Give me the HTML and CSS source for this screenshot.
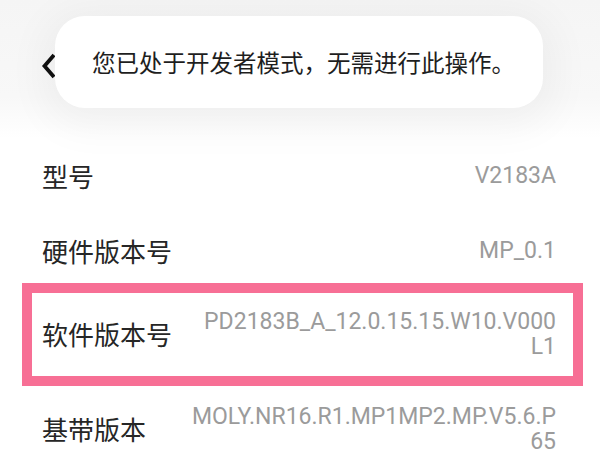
FILE: index.html
```html
<!DOCTYPE html>
<html lang="zh-CN">
<head>
    <meta charset="UTF-8">
    <meta name="viewport" content="width=device-width, initial-scale=1.0">
    <title>关于手机</title>
    <link rel="stylesheet" href="styles.css">
</head>
<body>
    <div class="topbar">
        <svg class="back" width="16" height="26" viewBox="0 0 16 26">
            <polyline points="13,2 3.5,13 13,24" fill="none" stroke="#111" stroke-width="3.8" stroke-linecap="butt" stroke-linejoin="miter"/>
        </svg>
    </div>

    <div class="toast">您已处于开发者模式，无需进行此操作。</div>

    <div class="list">
        <div class="row">
            <span class="label">型号</span>
            <span class="value">V2183A</span>
        </div>
        <div class="row">
            <span class="label">硬件版本号</span>
            <span class="value">MP_0.1</span>
        </div>
        <div class="row marked">
            <span class="label">软件版本号</span>
            <span class="value">PD2183B_A_12.0.15.15.W10.V000<br>L1</span>
        </div>
        <div class="row">
            <span class="label">基带版本</span>
            <span class="value">MOLY.NR16.R1.MP1MP2.MP.V5.6.P<br>65</span>
        </div>
    </div>
</body>
</html>
```

FILE: styles.css
```css
* {
    box-sizing: border-box;
}

body {
    margin: 0;
    background: #ffffff;
    font-family: "Noto Sans CJK SC", "Noto Sans", sans-serif;
    overflow: hidden;
}

.topbar {
    height: 138px;
    padding: 53px 0 0 41px;
    background: linear-gradient(#f5f5f5, #f8f8f8 70%, #ffffff);
}

.back {
    display: block;
}

/* toast lies over the title bar */
.toast {
    position: absolute;
    top: 16px;
    left: 55px;
    width: 488px;
    height: 92px;
    display: flex;
    align-items: center;
    padding-left: 37px;
    background: #ffffff;
    border-radius: 30px;
    box-shadow: 0 8px 40px 12px rgba(0, 0, 0, 0.045);
    font-size: 23.5px;
    color: #1e1e1e;
}

.row {
    display: flex;
    align-items: center;
    gap: 32px;
    min-height: 75px;
    padding: 18px 44px 18px 42px;
}

.label {
    flex-shrink: 0;
    font-size: 26px;
    line-height: 1.2;
    color: #262626;
}

.value {
    flex: 1;
    min-width: 0;
    text-align: right;
    white-space: nowrap;
    font-family: Roboto, "Liberation Sans", sans-serif;
    font-size: 23px;
    line-height: 25px;
    color: #9b9b9b;
}

.marked {
    margin: -5px 17px 0 22px;
    padding: 16px 17px 17px 10px;
    border: 10px solid #f76f95;
}
```
